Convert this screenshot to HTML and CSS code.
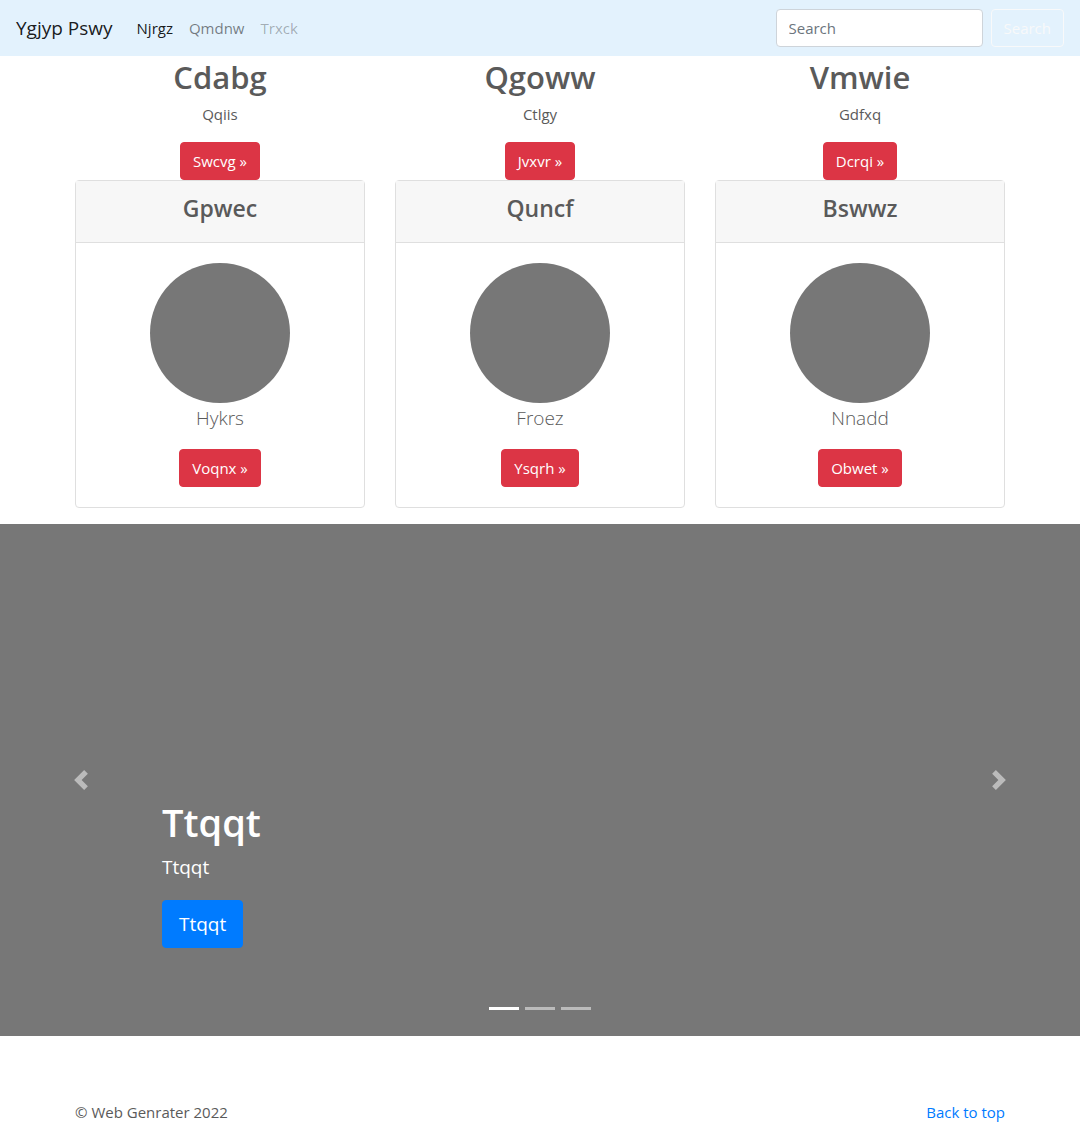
FILE: index.html
```html
<!DOCTYPE html>
<html lang="en">
<head>
  <meta charset="utf-8">
  <meta name="viewport" content="width=device-width, initial-scale=1">
  <title>Ygjyp Pswy</title>
  <link rel="stylesheet" href="styles.css">
</head>
<body id="top">
  <header>
    <nav class="navbar">
      <a class="brand" href="#">Ygjyp Pswy</a>
      <ul class="nav-list">
        <li><a class="nav-link active" href="#">Njrgz</a></li>
        <li><a class="nav-link" href="#">Qmdnw</a></li>
        <li><a class="nav-link disabled" href="#" aria-disabled="true">Trxck</a></li>
      </ul>
      <form class="search-form">
        <input class="search-input" type="text" placeholder="Search" aria-label="Search">
        <button class="btn btn-outline" type="submit">Search</button>
      </form>
    </nav>
  </header>

  <main>
    <div class="container columns">
      <section class="column">
        <h2 class="title">Cdabg</h2>
        <p class="text">Qqiis</p>
        <a class="btn btn-danger" href="#">Swcvg »</a>
      </section>
      <section class="column">
        <h2 class="title">Qgoww</h2>
        <p class="text">Ctlgy</p>
        <a class="btn btn-danger" href="#">Jvxvr »</a>
      </section>
      <section class="column">
        <h2 class="title">Vmwie</h2>
        <p class="text">Gdfxq</p>
        <a class="btn btn-danger" href="#">Dcrqi »</a>
      </section>
    </div>

    <div class="container columns">
      <article class="card">
        <div class="card-header"><h4 class="card-title">Gpwec</h4></div>
        <div class="card-body">
          <div class="avatar"></div>
          <p class="lead">Hykrs</p>
          <a class="btn btn-danger" href="#">Voqnx »</a>
        </div>
      </article>
      <article class="card">
        <div class="card-header"><h4 class="card-title">Quncf</h4></div>
        <div class="card-body">
          <div class="avatar"></div>
          <p class="lead">Froez</p>
          <a class="btn btn-danger" href="#">Ysqrh »</a>
        </div>
      </article>
      <article class="card">
        <div class="card-header"><h4 class="card-title">Bswwz</h4></div>
        <div class="card-body">
          <div class="avatar"></div>
          <p class="lead">Nnadd</p>
          <a class="btn btn-danger" href="#">Obwet »</a>
        </div>
      </article>
    </div>

    <section class="carousel">
      <div class="caption">
        <h1 class="caption-title">Ttqqt</h1>
        <p class="caption-text">Ttqqt</p>
        <a class="btn btn-primary" href="#">Ttqqt</a>
      </div>
      <button class="control control-prev" type="button" aria-label="Previous">
        <svg width="20" height="20" viewBox="0 0 8 8" fill="#fff" aria-hidden="true"><path d="M5.25 0l-4 4 4 4 1.5-1.5L4.25 4l2.5-2.5L5.25 0z"/></svg>
      </button>
      <button class="control control-next" type="button" aria-label="Next">
        <svg width="20" height="20" viewBox="0 0 8 8" fill="#fff" aria-hidden="true"><path d="M2.75 0l-1.5 1.5L3.75 4l-2.5 2.5L2.75 8l4-4-4-4z"/></svg>
      </button>
      <div class="indicators">
        <button class="indicator current" type="button" aria-label="Slide 1"></button>
        <button class="indicator" type="button" aria-label="Slide 2"></button>
        <button class="indicator" type="button" aria-label="Slide 3"></button>
      </div>
    </section>
  </main>

  <footer class="container footer">
    <span>© Web Genrater 2022</span>
    <a class="back" href="#top">Back to top</a>
  </footer>
</body>
</html>
```
FILE: styles.css
```css
*,
*::before,
*::after {
  box-sizing: border-box;
}

body {
  margin: 0;
  background: #fff;
  color: #5a5a5a;
  font-family: "Segoe UI", "Open Sans", "Noto Sans", sans-serif;
  font-size: 15px;
  line-height: 24px;
}

h1,
h2,
h4,
p,
ul {
  margin: 0;
  padding: 0;
}

a {
  text-decoration: none;
}

.navbar {
  display: flex;
  align-items: center;
  min-height: 56px;
  padding: 8px 16px;
  background: #e3f2fd;
}

.brand {
  margin-right: 16px;
  color: rgba(0, 0, 0, 0.9);
  font-size: 19px;
  line-height: 30px;
}

.nav-list {
  display: flex;
  flex: 1;
  list-style: none;
}

.nav-link {
  display: block;
  padding: 8px;
  color: rgba(0, 0, 0, 0.5);
}

.nav-link.active {
  color: rgba(0, 0, 0, 0.9);
}

.nav-link.disabled {
  color: rgba(0, 0, 0, 0.3);
}

.search-form {
  display: flex;
  gap: 8px;
}

.search-input {
  width: 207px;
  height: 38px;
  padding: 6px 12px;
  border: 1px solid #ced4da;
  border-radius: 4px;
  background: #fff;
  color: #495057;
  font: inherit;
}

.search-input::placeholder {
  color: #6c757d;
  opacity: 1;
}

.btn {
  display: inline-block;
  padding: 6px 12px;
  border: 1px solid transparent;
  border-radius: 4px;
  background: transparent;
  color: #fff;
  font: inherit;
  cursor: pointer;
}

.btn-outline {
  border-color: #f8f9fa;
  color: #f8f9fa;
}

.btn-danger {
  border-color: #dc3545;
  background: #dc3545;
}

.btn-primary {
  padding: 8px 16px;
  border-color: #007bff;
  background: #007bff;
  font-size: 19px;
  line-height: 30px;
}

.container {
  width: 100%;
  max-width: 960px;
  margin: 0 auto;
  padding: 0 15px;
}

.columns {
  display: grid;
  grid-template-columns: repeat(3, 1fr);
  gap: 30px;
}

.column {
  display: flex;
  flex-direction: column;
  align-items: center;
  text-align: center;
}

.title {
  margin-bottom: 4px;
  font-size: 31px;
  font-weight: 600;
  line-height: 42px;
}

.text {
  margin-bottom: 16px;
}

.card {
  margin-bottom: 16px;
  border: 1px solid #dfdfdf;
  border-radius: 4px;
  text-align: center;
}

.card-header {
  padding: 12px 20px 18px;
  border-bottom: 1px solid #dfdfdf;
  background: #f7f7f7;
}

.card-title {
  font-size: 23px;
  font-weight: 600;
  line-height: 31px;
}

.card-body {
  display: flex;
  flex-direction: column;
  align-items: center;
  padding: 20px;
}

.avatar {
  width: 140px;
  height: 140px;
  border-radius: 50%;
  background: #777;
}

.lead {
  margin-bottom: 16px;
  font-size: 19px;
  font-weight: 300;
  line-height: 30px;
}

.carousel {
  position: relative;
  display: flex;
  align-items: flex-end;
  min-height: 512px;
  padding: 0 15% 88px;
  background: #777;
  color: #fff;
}

.caption-title {
  margin-bottom: 6px;
  font-size: 38px;
  font-weight: 600;
  line-height: 48px;
}

.caption-text {
  margin-bottom: 18px;
  font-size: 19px;
  line-height: 30px;
}

.control {
  position: absolute;
  top: 0;
  bottom: 0;
  display: flex;
  align-items: center;
  justify-content: center;
  width: 15%;
  padding: 0;
  border: 0;
  background: none;
  opacity: 0.5;
  cursor: pointer;
}

.control-prev {
  left: 0;
}

.control-next {
  right: 0;
}

.indicators {
  position: absolute;
  right: 15%;
  bottom: 26px;
  left: 15%;
  display: flex;
  justify-content: center;
  gap: 6px;
}

.indicator {
  width: 30px;
  height: 3px;
  padding: 0;
  border: 0;
  background: #fff;
  opacity: 0.5;
  cursor: pointer;
}

.indicator.current {
  opacity: 1;
}

.footer {
  display: flex;
  justify-content: space-between;
  margin-top: 64px;
}

.back {
  color: #007bff;
}
```
